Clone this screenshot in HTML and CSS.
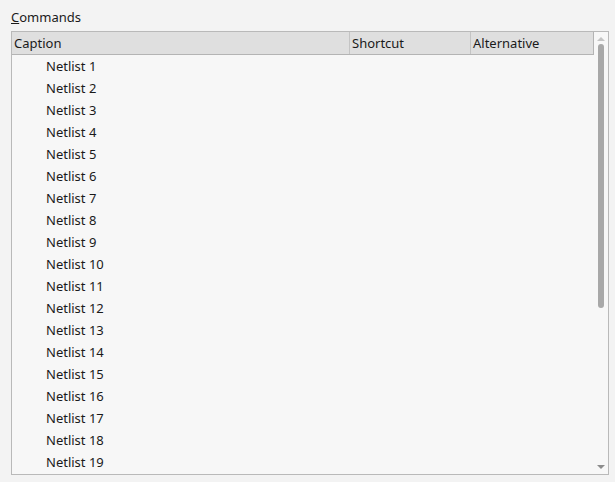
FILE: index.html
```html
<!DOCTYPE html>
<html>
<head>
<meta charset="utf-8">
<link rel="stylesheet" href="styles.css">
</head>
<body>
<div class="panel">
  <div class="label"><span class="ul">C</span>ommands</div>
  <div class="box">
    <div class="main">
      <div class="header">
        <div class="col c1">Caption</div>
        <div class="col c2">Shortcut</div>
        <div class="col c3">Alternative</div>
      </div>
      <div class="rows">
        <div class="row">Netlist 1</div>
        <div class="row">Netlist 2</div>
        <div class="row">Netlist 3</div>
        <div class="row">Netlist 4</div>
        <div class="row">Netlist 5</div>
        <div class="row">Netlist 6</div>
        <div class="row">Netlist 7</div>
        <div class="row">Netlist 8</div>
        <div class="row">Netlist 9</div>
        <div class="row">Netlist 10</div>
        <div class="row">Netlist 11</div>
        <div class="row">Netlist 12</div>
        <div class="row">Netlist 13</div>
        <div class="row">Netlist 14</div>
        <div class="row">Netlist 15</div>
        <div class="row">Netlist 16</div>
        <div class="row">Netlist 17</div>
        <div class="row">Netlist 18</div>
        <div class="row">Netlist 19</div>
      </div>
    </div>
    <div class="scrollbar">
      <div class="arrow up"></div>
      <div class="track"><div class="thumb"></div></div>
      <div class="arrow down"></div>
    </div>
  </div>
</div>
</body>
</html>
```
FILE: styles.css
```css
html, body {
  margin: 0;
  padding: 0;
  background: #f3f3f3;
}
body {
  width: 615px;
  height: 482px;
  overflow: hidden;
  font-family: "Noto Sans", "Open Sans", sans-serif;
  font-size: 13px;
  color: #1a1a1a;
}
.panel {
  padding: 8px 6px 0 11px;
}
.label {
  height: 23px;
  line-height: 18px;
}
.ul {
  text-decoration: underline;
}
.box {
  width: 596px;
  height: 442px;
  border: 1px solid #b9b9b9;
  background: #f7f7f7;
  display: flex;
  overflow: hidden;
}
.main {
  flex: 1;
  display: flex;
  flex-direction: column;
  overflow: hidden;
}
.header {
  display: flex;
  height: 22px;
  flex: none;
  background: #dfdfdf;
  border-bottom: 1px solid #b4b4b4;
  border-right: 1px solid #b4b4b4;
}
.col {
  line-height: 22px;
  padding-left: 2px;
  box-sizing: border-box;
}
.c1 { width: 337px; }
.c2 { width: 121px; border-left: 1px solid #c4c4c4; }
.c3 { flex: 1; border-left: 1px solid #c4c4c4; }
.rows {
  flex: 1;
  overflow: hidden;
}
.row {
  height: 22px;
  line-height: 22px;
  box-sizing: border-box;
  padding-left: 34px;
}
.scrollbar {
  width: 14px;
  flex: none;
  display: flex;
  flex-direction: column;
  align-items: center;
}
.arrow {
  width: 0;
  height: 0;
  border-left: 4px solid transparent;
  border-right: 4px solid transparent;
  flex: none;
}
.arrow.up {
  margin-top: 5px;
  border-bottom: 4px solid #c4c4c4;
}
.arrow.down {
  margin-bottom: 5px;
  border-top: 4px solid #8c8c8c;
}
.track {
  flex: 1;
  width: 100%;
  display: flex;
  justify-content: center;
  padding-top: 3px;
}
.thumb {
  width: 6px;
  height: 264px;
  background: #a8a8a8;
  border-radius: 3px;
}
```
